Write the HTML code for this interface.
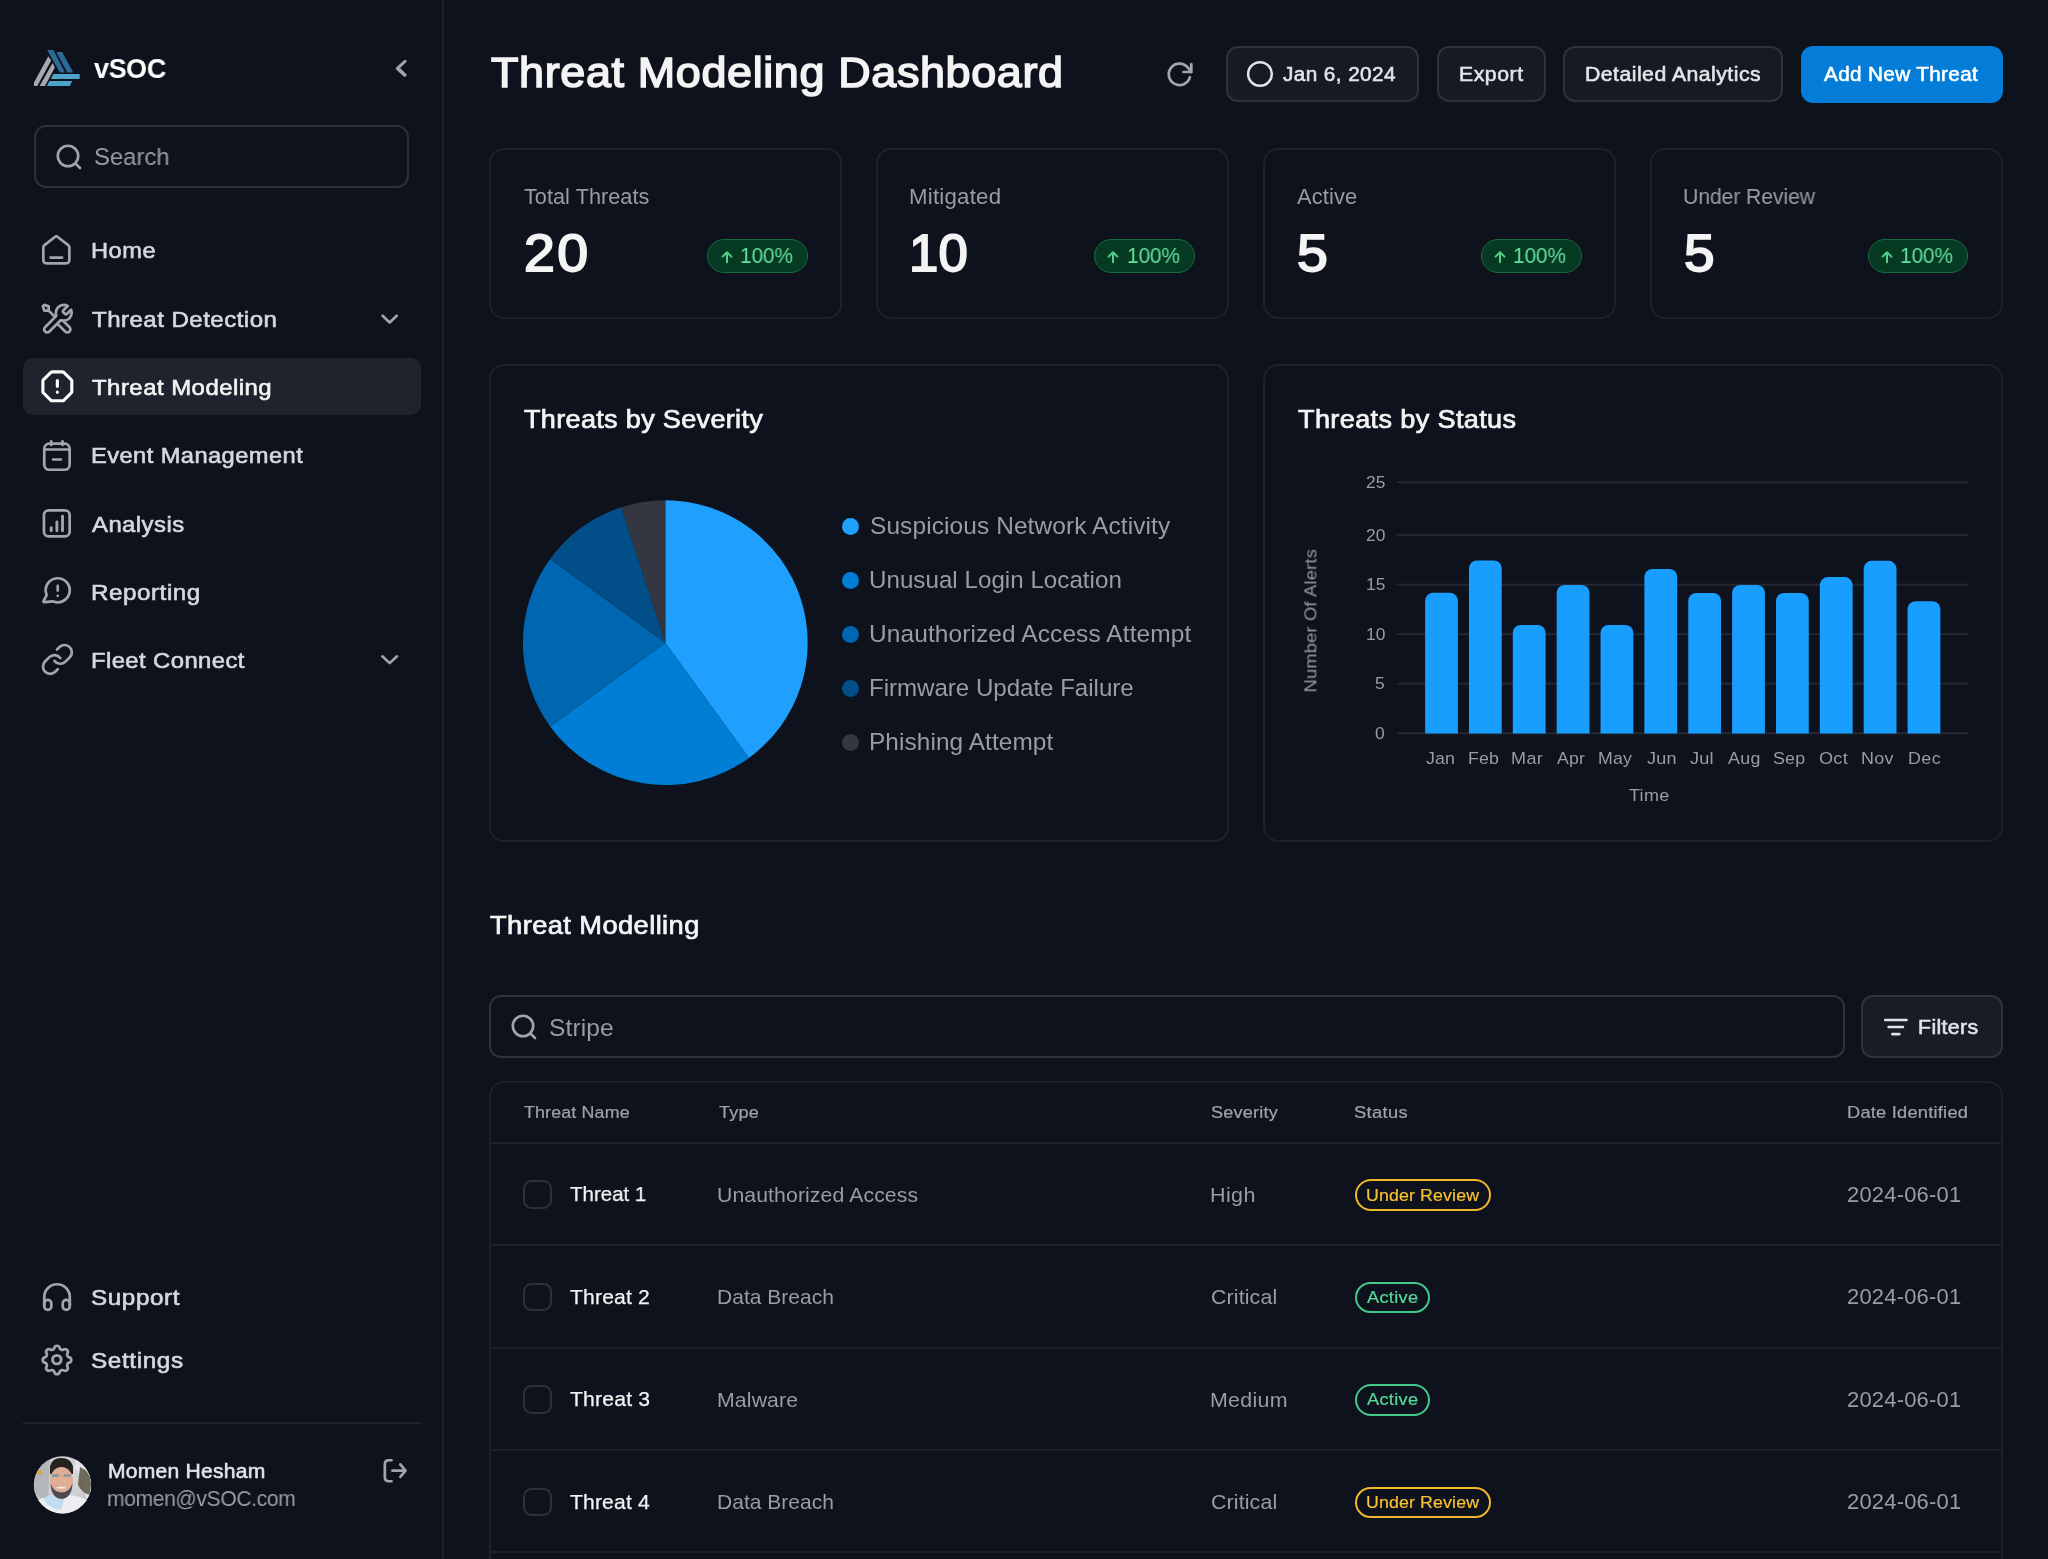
<!DOCTYPE html>
<html><head><meta charset="utf-8"><style>
html,body{margin:0;padding:0;}
body{width:2048px;height:1559px;overflow:hidden;position:relative;background:#0e121c;font-family:"Liberation Sans",sans-serif;}
.t{position:absolute;white-space:nowrap;will-change:transform;}
.a{position:absolute;box-sizing:border-box;}
svg{position:absolute;overflow:visible;}
</style></head><body>
<div class="a" style="left:442px;top:0px;width:2px;height:1559px;background:#1c202a"></div>
<svg style="left:0;top:0" width="100" height="100" viewBox="0 0 100 100">
<polygon points="33.95,86.1 33.95,82.4 48.3,56.2 51.2,60.4 37.3,86.1" fill="#a6a8ae"/>
<polygon points="39.6,86.1 52.6,62.9 54.8,67.5 45,86.1" fill="#a6a8ae"/>
<polygon points="47.2,50 53.4,50 65,72.5 59.9,72.5" fill="#2c6b98"/>
<polygon points="56.25,52.1 62.2,52.1 73.2,72.5 67.25,72.5" fill="#2c6b98"/>
<polygon points="50.9,79 53.4,73.9 79.7,73.9 79.7,79" fill="#4ea3cd"/>
<polygon points="46.9,86.1 49.5,81 72.05,81 69.8,86.1" fill="#4ea3cd"/>
<g fill="#3cb371"><circle cx="52.3" cy="83.5" r="0.45"/><circle cx="54.5" cy="84.3" r="0.45"/><circle cx="57.4" cy="84.3" r="0.45"/><circle cx="60.4" cy="84.3" r="0.45"/><circle cx="63.4" cy="84.3" r="0.45"/><circle cx="66.4" cy="84.3" r="0.45"/></g>
</svg>
<svg style="left:390px;top:56px" width="24" height="24" viewBox="0 0 24 24"><polyline points="15.5,5 8.5,12 15.5,19" fill="none" stroke="#a1a3aa" stroke-width="2.4" stroke-linecap="round" stroke-linejoin="round"/></svg>
<div class="a" style="left:34.2px;top:125.4px;width:375px;height:62.2px;border:2px solid #2c303a;border-radius:12px"></div>
<svg style="left:51.599999999999994px;top:139.9px" width="40" height="40" viewBox="0 0 40 40"><circle cx="16" cy="16" r="10.2" fill="none" stroke="#a3a5ab" stroke-width="2.6"/><line x1="23.6" y1="23.6" x2="28" y2="28" stroke="#a3a5ab" stroke-width="2.6" stroke-linecap="round"/></svg>
<div class="a" style="left:23px;top:358.2px;width:398px;height:57.2px;background:#1f232e;border-radius:10px"></div>
<svg style="left:39.40px;top:233.10px" width="34.68" height="34.68" viewBox="0 0 24 24" fill="none" stroke="#a3a5ac" stroke-width="1.869" stroke-linecap="round" stroke-linejoin="round"><path d="M8 17H16M11.0177 2.76401L4.23539 8.03914C3.78202 8.39176 3.55534 8.56807 3.39203 8.78887C3.24737 8.98446 3.1396 9.2048 3.07403 9.43907C3 9.70353 3 9.99071 3 10.5651V17.8C3 18.9201 3 19.4802 3.21799 19.908C3.40973 20.2843 3.71569 20.5903 4.09202 20.782C4.51984 21 5.0799 21 6.2 21H17.8C18.9201 21 19.4802 21 19.908 20.782C20.2843 20.5903 20.5903 20.2843 20.782 19.908C21 19.4802 21 18.9201 21 17.8V10.5651C21 9.99071 21 9.70353 20.926 9.43907C20.8604 9.2048 20.7526 8.98446 20.608 8.78887C20.4447 8.56807 20.218 8.39176 19.7646 8.03914L12.9823 2.76401C12.631 2.49076 12.4553 2.35413 12.2613 2.30162C12.0902 2.25528 11.9098 2.25528 11.7387 2.30162C11.5447 2.35413 11.369 2.49076 11.0177 2.76401Z"/></svg>
<svg style="left:39.80px;top:301.50px" width="34.56" height="34.56" viewBox="0 0 24 24" fill="none" stroke="#a3a5ac" stroke-width="1.875" stroke-linecap="round" stroke-linejoin="round"><path d="M6 6L10.5 10.5M6 6H3L2 3L3 2L6 3V6ZM19.259 2.74101L16.6314 5.36863C16.2354 5.76465 16.0373 5.96265 15.9632 6.19098C15.8979 6.39183 15.8979 6.60817 15.9632 6.80902C16.0373 7.03735 16.2354 7.23535 16.6314 7.63137L16.8686 7.86863C17.2646 8.26465 17.4627 8.46265 17.691 8.53684C17.8918 8.60211 18.1082 8.60211 18.309 8.53684C18.5373 8.46265 18.7354 8.26465 19.1314 7.86863L21.5893 5.41072C21.854 6.05488 22 6.76039 22 7.5C22 10.5376 19.5376 13 16.5 13C16.1338 13 15.7759 12.9642 15.4298 12.8959C14.9436 12.8001 14.7005 12.7521 14.5532 12.7668C14.3965 12.7824 14.3193 12.8059 14.1769 12.8767C14.0435 12.9431 13.9092 13.0774 13.6407 13.3459L6.5 20.5C5.67157 21.3284 4.32843 21.3284 3.5 20.5C2.67157 19.6716 2.67157 18.3284 3.5 17.5L10.6541 10.3459C10.9226 10.0774 11.0569 9.94309 11.1233 9.80972C11.1941 9.66734 11.2176 9.59007 11.2332 9.43337C11.2479 9.28603 11.1999 9.04293 11.1041 8.55675C11.0358 8.21063 11 7.85269 11 7.5C11 4.46243 13.4624 2 16.5 2C17.5055 2 18.448 2.26982 19.259 2.74101ZM12.0001 14.9999L17.5 20.4999C18.3284 21.3283 19.6716 21.3283 20.5 20.4999C21.3284 19.6715 21.3284 18.3283 20.5 17.4999L15.9753 12.9753C15.655 12.9447 15.3427 12.8869 15.0408 12.8044C14.6517 12.6981 14.2249 12.7753 13.9397 13.0605L12.0001 14.9999Z"/></svg>
<svg style="left:39.50px;top:369.40px" width="34.70" height="34.70" viewBox="0 0 24 24" fill="none" stroke="#ffffff" stroke-width="2.144" stroke-linecap="round" stroke-linejoin="round"><path d="M12 8V12M12 16H12.01"/><path d="M2 8.52274V15.4773C2 15.7218 2 15.8441 2.02763 15.9592C2.05213 16.0613 2.09253 16.1588 2.14736 16.2483C2.20919 16.3492 2.29568 16.4357 2.46863 16.6086L7.39137 21.5314C7.56432 21.7043 7.6508 21.7908 7.75172 21.8526C7.84119 21.9075 7.93873 21.9479 8.04077 21.9724C8.15586 22 8.27815 22 8.52274 22H15.4773C15.7218 22 15.8441 22 15.9592 21.9724C16.0613 21.9479 16.1588 21.9075 16.2483 21.8526C16.3492 21.7908 16.4357 21.7043 16.6086 21.5314L21.5314 16.6086C21.7043 16.4357 21.7908 16.3492 21.8526 16.2483C21.9075 16.1588 21.9479 16.0613 21.9724 15.9592C22 15.8441 22 15.7218 22 15.4773V8.52274C22 8.27815 22 8.15586 21.9724 8.04077C21.9479 7.93873 21.9075 7.84119 21.8526 7.75172C21.7908 7.6508 21.7043 7.56432 21.5314 7.39137L16.6086 2.46863C16.4357 2.29568 16.3492 2.20919 16.2483 2.14736C16.1588 2.09253 16.0613 2.05213 15.9592 2.02763C15.8441 2 15.7218 2 15.4773 2H8.52274C8.27815 2 8.15586 2 8.04077 2.02763C7.93873 2.05213 7.84119 2.09253 7.75172 2.14736C7.6508 2.20919 7.56432 2.29568 7.39137 2.46863L2.46863 7.39137C2.29568 7.56432 2.20919 7.6508 2.14736 7.75172C2.09253 7.84119 2.05213 7.93873 2.02763 8.04077C2 8.15586 2 8.27815 2 8.52274Z"/></svg>
<svg style="left:0;top:0" width="2048" height="1559" viewBox="0 0 2048 1559" fill="none" stroke="#a3a5ac" stroke-width="2.7" stroke-linecap="round" stroke-linejoin="round"><rect x="44.25" y="443.65" width="25.4" height="26.1" rx="5"/><path d="M44.25 449.5H69.65M51.2 441.25V445M62.5 441.25V445M53 459.5H61"/></svg>
<svg style="left:0;top:0" width="2048" height="1559" viewBox="0 0 2048 1559" fill="none" stroke="#a3a5ac" stroke-width="2.7" stroke-linecap="round" stroke-linejoin="round"><rect x="43.95" y="510.45" width="25.7" height="25.95" rx="4.6"/><path d="M51.2 527.6V530.7M56.9 521.9V530.7M62.5 516.3V530.7" stroke-width="2.9"/></svg>
<svg style="left:39.87px;top:574.19px" width="34.03" height="34.03" viewBox="0 0 24 24" fill="none" stroke="#a3a5ac" stroke-width="1.904" stroke-linecap="round" stroke-linejoin="round"><path d="M12.5 8.3V11.7M12.5 15.4H12.51"/><path d="M21 11.5C21 16.194 17.194 20 12.5 20C11.423 20 10.393 19.8 9.445 19.434C9.271 19.367 9.185 19.334 9.116 19.318C9.048 19.303 8.999 19.296 8.93 19.294C8.859 19.291 8.782 19.299 8.627 19.315L3.508 19.844C3.02 19.894 2.776 19.92 2.633 19.832C2.507 19.755 2.422 19.628 2.399 19.483C2.373 19.316 2.49 19.1 2.723 18.668L4.358 15.638C4.492 15.39 4.56 15.265 4.59 15.145C4.62 15.027 4.628 14.944 4.619 14.821C4.61 14.696 4.557 14.544 4.451 14.238C4.159 13.399 4 12.468 4 11.5C4 6.806 7.806 3 12.5 3C17.194 3 21 6.806 21 11.5Z"/></svg>
<svg style="left:39.60px;top:642.10px" width="34.80" height="34.80" viewBox="0 0 24 24" fill="none" stroke="#a3a5ac" stroke-width="1.862" stroke-linecap="round" stroke-linejoin="round"><path d="M10 13a5 5 0 0 0 7.54.54l3-3a5 5 0 0 0-7.07-7.07l-1.72 1.71"/><path d="M14 11a5 5 0 0 0-7.54-.54l-3 3a5 5 0 0 0 7.07 7.07l1.71-1.71"/></svg>
<svg style="left:0;top:0" width="2048" height="1559" viewBox="0 0 2048 1559" fill="none" stroke="#a3a5ac" stroke-width="2.6" stroke-linecap="round" stroke-linejoin="round"><polyline points="382.6,315.7 389.65,322.5 396.7,315.7"/><polyline points="382.3,656.3 389.65,663.1 397,656.3"/><polyline points="404.7,61.5 397,68.5 404.7,75.5"/></svg>
<svg style="left:39.86px;top:1279.86px" width="34.08" height="34.08" viewBox="0 0 24 24" fill="none" stroke="#a3a5ac" stroke-width="1.901" stroke-linecap="round" stroke-linejoin="round"><path d="M3 18V12C3 7.02944 7.02944 3 12 3C16.9706 3 21 7.02944 21 12V18"/><path d="M5.5 21C4.11929 21 3 19.8807 3 18.5V16.5C3 15.1193 4.11929 14 5.5 14C6.88071 14 8 15.1193 8 16.5V18.5C8 19.8807 6.88071 21 5.5 21ZM18.5 21C17.1193 21 16 19.8807 16 18.5V16.5C16 15.1193 17.1193 14 18.5 14C19.8807 14 21 15.1193 21 16.5V18.5C21 19.8807 19.8807 21 18.5 21Z"/></svg>
<svg style="left:37.85px;top:1340.65px" width="37.99" height="37.99" viewBox="0 0 24 24" fill="none" stroke="#a3a5ac" stroke-width="1.706" stroke-linecap="round" stroke-linejoin="round"><path d="M10.325 4.317c.426 -1.756 2.924 -1.756 3.35 0a1.724 1.724 0 0 0 2.573 1.066c1.543 -.94 3.31 .826 2.37 2.37a1.724 1.724 0 0 0 1.065 2.572c1.756 .426 1.756 2.924 0 3.35a1.724 1.724 0 0 0 -1.066 2.573c.94 1.543 -.826 3.31 -2.37 2.37a1.724 1.724 0 0 0 -2.572 1.065c-.426 1.756 -2.924 1.756 -3.35 0a1.724 1.724 0 0 0 -2.573 -1.066c-1.543 .94 -3.31 -.826 -2.37 -2.37a1.724 1.724 0 0 0 -1.065 -2.572c-1.756 -.426 -1.756 -2.924 0 -3.35a1.724 1.724 0 0 0 1.066 -2.573c-.94 -1.543 .826 -3.31 2.37 -2.37c1 .608 2.296 .07 2.572 -1.065z"/></svg>
<svg style="left:0;top:0" width="2048" height="1559" viewBox="0 0 2048 1559" fill="none" stroke="#a3a5ac" stroke-width="2.7" stroke-linecap="round" stroke-linejoin="round"><circle cx="56.85" cy="1359.65" r="4.25" stroke-width="2.9"/></svg>
<div class="a" style="left:23px;top:1422px;width:398px;height:2px;background:#1f232d"></div>
<svg style="left:0;top:0" width="2048" height="1559" viewBox="0 0 2048 1559">
<defs><clipPath id="av"><circle cx="62.5" cy="1484.9" r="28.6"/></clipPath>
<radialGradient id="avbg" cx="0.5" cy="0.4" r="0.6"><stop offset="0" stop-color="#dcdde0"/><stop offset="1" stop-color="#bfc1c5"/></radialGradient></defs>
<g clip-path="url(#av)">
<rect x="30" y="1452" width="66" height="66" fill="url(#avbg)"/>
<path d="M33 1470 Q40 1462 50 1460 L48 1500 Q38 1498 33 1490Z" fill="#b4b6ba"/>
<path d="M76 1458 Q90 1462 92 1478 L92 1500 L86 1498 Q84 1476 74 1468Z" fill="#e4e5e8"/>
<path d="M80 1467 Q90 1471 91 1483 L90 1495 Q82 1493 78 1485Z" fill="#5a5440" opacity="0.85"/>
<ellipse cx="39.5" cy="1472.5" rx="2.6" ry="2.2" fill="#e0a52a"/>
<path d="M34 1504 Q44 1494 62 1495 Q82 1494 92 1504 L92 1520 L34 1520Z" fill="#eceef1"/>
<path d="M44 1497 Q55 1494 65 1497 L61 1510 Q50 1509 44 1500Z" fill="#a9d0f2" opacity="0.6"/>
<path d="M50 1470 Q50 1458 61 1458 Q73 1458 73 1470 L73 1474 L50 1474Z" fill="#26221f"/>
<ellipse cx="61.5" cy="1480.5" rx="11.5" ry="13.5" fill="#dfae93"/>
<path d="M50 1470 Q52 1462 61.5 1462 Q71 1462 73 1470 L73 1467 Q70 1459 61.5 1459 Q53 1459 50 1467Z" fill="#26221f"/>
<path d="M50.5 1483 Q51 1498 61.5 1499 Q72 1498 72.5 1483 Q70 1492 61.5 1492.5 Q53 1492 50.5 1483Z" fill="#4a4a50"/>
<rect x="51.5" y="1474.3" width="7.5" height="2.4" rx="1" fill="#8995a2"/>
<rect x="63.5" y="1474.3" width="7.5" height="2.4" rx="1" fill="#8995a2"/>
<rect x="56.5" y="1486.8" width="9" height="1.8" rx="0.8" fill="#f1ebe6"/>
</g></svg>
<svg style="left:0;top:0" width="2048" height="1559" viewBox="0 0 2048 1559" fill="none" stroke="#a3a5ac" stroke-width="2.7" stroke-linecap="round" stroke-linejoin="round"><path d="M391.55 1460.25H388.85Q384.85 1460.25 384.85 1464.25V1477.25Q384.85 1481.25 388.85 1481.25H391.55M392.35 1470.6H405.5M400.3 1464.4L405.5 1470.6L400.3 1476.8"/></svg>
<svg style="left:0;top:0" width="2048" height="1559" viewBox="0 0 2048 1559" fill="none" stroke="#a3a5ac" stroke-width="2.7" stroke-linecap="round" stroke-linejoin="round"><path d="M1189.9 77.2A10.75 10.75 0 1 1 1187.9 67.6L1191.3 72.0"/><path d="M1191.3 64.2V72.0H1183.5"/></svg>
<div class="a" style="left:1226px;top:45.9px;width:193.4000000000001px;height:56.199999999999996px;background:#161a24;border:2px solid #2e323c;border-radius:12px"></div>
<div class="a" style="left:1436.6px;top:45.9px;width:109.10000000000014px;height:56.199999999999996px;background:#161a24;border:2px solid #2e323c;border-radius:12px"></div>
<div class="a" style="left:1563.2px;top:45.9px;width:220.0999999999999px;height:56.199999999999996px;background:#161a24;border:2px solid #2e323c;border-radius:12px"></div>
<div class="a" style="left:1800.5px;top:45.6px;width:202.2px;height:57px;background:#037dd8;border-radius:12px"></div>
<svg style="left:1240px;top:54px" width="40" height="40" viewBox="0 0 40 40"><circle cx="20" cy="20" r="11.85" fill="none" stroke="#e2e3e6" stroke-width="2.5"/></svg>
<div class="a" style="left:489.0px;top:148px;width:353.4px;height:170.6px;border:2px solid #1e212b;border-radius:15px"></div>
<div class="a" style="left:707.1px;top:239.4px;width:100.7px;height:33.4px;background:#073a22;border:1.5px solid #166b3e;border-radius:17px"></div>
<svg style="left:718.5px;top:249px" width="16" height="16" viewBox="0 0 16 16"><path d="M8 13.2 V3.5 M3.6 7.6 L8 3.2 L12.4 7.6" fill="none" stroke="#4fcf8a" stroke-width="2" stroke-linecap="round" stroke-linejoin="round"/></svg>
<div class="a" style="left:875.9px;top:148px;width:353.4px;height:170.6px;border:2px solid #1e212b;border-radius:15px"></div>
<div class="a" style="left:1094.0px;top:239.4px;width:100.7px;height:33.4px;background:#073a22;border:1.5px solid #166b3e;border-radius:17px"></div>
<svg style="left:1105.4px;top:249px" width="16" height="16" viewBox="0 0 16 16"><path d="M8 13.2 V3.5 M3.6 7.6 L8 3.2 L12.4 7.6" fill="none" stroke="#4fcf8a" stroke-width="2" stroke-linecap="round" stroke-linejoin="round"/></svg>
<div class="a" style="left:1262.8px;top:148px;width:353.4px;height:170.6px;border:2px solid #1e212b;border-radius:15px"></div>
<div class="a" style="left:1480.8999999999999px;top:239.4px;width:100.7px;height:33.4px;background:#073a22;border:1.5px solid #166b3e;border-radius:17px"></div>
<svg style="left:1492.3px;top:249px" width="16" height="16" viewBox="0 0 16 16"><path d="M8 13.2 V3.5 M3.6 7.6 L8 3.2 L12.4 7.6" fill="none" stroke="#4fcf8a" stroke-width="2" stroke-linecap="round" stroke-linejoin="round"/></svg>
<div class="a" style="left:1649.6px;top:148px;width:353.4px;height:170.6px;border:2px solid #1e212b;border-radius:15px"></div>
<div class="a" style="left:1867.6999999999998px;top:239.4px;width:100.7px;height:33.4px;background:#073a22;border:1.5px solid #166b3e;border-radius:17px"></div>
<svg style="left:1879.1px;top:249px" width="16" height="16" viewBox="0 0 16 16"><path d="M8 13.2 V3.5 M3.6 7.6 L8 3.2 L12.4 7.6" fill="none" stroke="#4fcf8a" stroke-width="2" stroke-linecap="round" stroke-linejoin="round"/></svg>
<div class="a" style="left:489px;top:364px;width:740.1px;height:478.2px;border:2px solid #1e212b;border-radius:15px"></div>
<div class="a" style="left:1262.6px;top:364px;width:740.4px;height:478.2px;border:2px solid #1e212b;border-radius:15px"></div>
<svg style="left:0;top:0" width="2048" height="1559" viewBox="0 0 2048 1559"><path d="M665.3 642.7 L665.30 500.30 A142.4 142.4 0 0 1 749.00 757.90 Z" fill="#1fa0fe"/><path d="M665.3 642.7 L749.00 757.90 A142.4 142.4 0 0 1 550.10 726.40 Z" fill="#007ed6"/><path d="M665.3 642.7 L550.10 726.40 A142.4 142.4 0 0 1 550.10 559.00 Z" fill="#0066b0"/><path d="M665.3 642.7 L550.10 559.00 A142.4 142.4 0 0 1 621.30 507.27 Z" fill="#024e89"/><path d="M665.3 642.7 L621.30 507.27 A142.4 142.4 0 0 1 665.30 500.30 Z" fill="#343742"/></svg>
<div class="a" style="left:841.6999999999999px;top:517.5999999999999px;width:17.4px;height:17.4px;background:#1fa0fe;border-radius:50%"></div>
<div class="a" style="left:841.6999999999999px;top:571.5999999999999px;width:17.4px;height:17.4px;background:#007ed6;border-radius:50%"></div>
<div class="a" style="left:841.6999999999999px;top:625.5999999999999px;width:17.4px;height:17.4px;background:#0066b0;border-radius:50%"></div>
<div class="a" style="left:841.6999999999999px;top:679.5999999999999px;width:17.4px;height:17.4px;background:#024e89;border-radius:50%"></div>
<div class="a" style="left:841.6999999999999px;top:733.5999999999999px;width:17.4px;height:17.4px;background:#343742;border-radius:50%"></div>
<svg style="left:0;top:0" width="2048" height="1559" viewBox="0 0 2048 1559"><rect x="1396.8" y="732.3" width="571.2" height="2" fill="#242833"/><rect x="1396.8" y="682.6" width="571.2" height="2" fill="#242833"/><rect x="1396.8" y="633.2" width="571.2" height="2" fill="#242833"/><rect x="1396.8" y="583.7" width="571.2" height="2" fill="#242833"/><rect x="1396.8" y="534.1" width="571.2" height="2" fill="#242833"/><rect x="1396.8" y="481.3" width="571.2" height="2" fill="#242833"/><path d="M1425.10 733.5 V600.80 a8 8 0 0 1 8 -8 H1449.90 a8 8 0 0 1 8 8 V733.5 Z" fill="#189eff"/><path d="M1468.96 733.5 V568.50 a8 8 0 0 1 8 -8 H1493.76 a8 8 0 0 1 8 8 V733.5 Z" fill="#189eff"/><path d="M1512.82 733.5 V633.00 a8 8 0 0 1 8 -8 H1537.62 a8 8 0 0 1 8 8 V733.5 Z" fill="#189eff"/><path d="M1556.68 733.5 V592.90 a8 8 0 0 1 8 -8 H1581.48 a8 8 0 0 1 8 8 V733.5 Z" fill="#189eff"/><path d="M1600.54 733.5 V633.00 a8 8 0 0 1 8 -8 H1625.34 a8 8 0 0 1 8 8 V733.5 Z" fill="#189eff"/><path d="M1644.40 733.5 V576.90 a8 8 0 0 1 8 -8 H1669.20 a8 8 0 0 1 8 8 V733.5 Z" fill="#189eff"/><path d="M1688.26 733.5 V601.00 a8 8 0 0 1 8 -8 H1713.06 a8 8 0 0 1 8 8 V733.5 Z" fill="#189eff"/><path d="M1732.12 733.5 V592.90 a8 8 0 0 1 8 -8 H1756.92 a8 8 0 0 1 8 8 V733.5 Z" fill="#189eff"/><path d="M1775.98 733.5 V601.00 a8 8 0 0 1 8 -8 H1800.78 a8 8 0 0 1 8 8 V733.5 Z" fill="#189eff"/><path d="M1819.84 733.5 V585.10 a8 8 0 0 1 8 -8 H1844.64 a8 8 0 0 1 8 8 V733.5 Z" fill="#189eff"/><path d="M1863.70 733.5 V568.80 a8 8 0 0 1 8 -8 H1888.50 a8 8 0 0 1 8 8 V733.5 Z" fill="#189eff"/><path d="M1907.56 733.5 V609.20 a8 8 0 0 1 8 -8 H1932.36 a8 8 0 0 1 8 8 V733.5 Z" fill="#189eff"/></svg>
<div class="a" style="left:489px;top:995.4px;width:1356px;height:62.6px;border:2px solid #2e323c;border-radius:12px"></div>
<svg style="left:506.79999999999995px;top:1010.4000000000001px" width="40" height="40" viewBox="0 0 40 40"><circle cx="16" cy="16" r="10.2" fill="none" stroke="#a3a5ab" stroke-width="2.6"/><line x1="23.6" y1="23.6" x2="28" y2="28" stroke="#a3a5ab" stroke-width="2.6" stroke-linecap="round"/></svg>
<div class="a" style="left:1861.2px;top:995.4px;width:141.79999999999995px;height:62.60000000000002px;background:#181c26;border:2px solid #2e323c;border-radius:12px"></div>
<svg style="left:1875px;top:1007px" width="40" height="40" viewBox="0 0 40 40"><path d="M10.2 12.9 H31.6 M13.6 19.95 H28 M17.3 27.1 H24.4" fill="none" stroke="#e2e3e6" stroke-width="2.55" stroke-linecap="round"/></svg>
<div class="a" style="left:489px;top:1080.8px;width:1514px;height:600px;border:2px solid #1e212b;border-radius:15px"></div>
<div class="a" style="left:491px;top:1141.9px;width:1510px;height:2px;background:#1e212b"></div>
<div class="a" style="left:491px;top:1244.3px;width:1510px;height:2px;background:#1e212b"></div>
<div class="a" style="left:491px;top:1346.7px;width:1510px;height:2px;background:#1e212b"></div>
<div class="a" style="left:491px;top:1449.1px;width:1510px;height:2px;background:#1e212b"></div>
<div class="a" style="left:491px;top:1551.4px;width:1510px;height:2px;background:#1e212b"></div>
<div class="a" style="left:523.1px;top:1180.4px;width:28.9px;height:28.6px;border:2px solid #2d3039;border-radius:8.5px"></div>
<div class="a" style="left:523.1px;top:1282.9px;width:28.9px;height:28.6px;border:2px solid #2d3039;border-radius:8.5px"></div>
<div class="a" style="left:523.1px;top:1385.4px;width:28.9px;height:28.6px;border:2px solid #2d3039;border-radius:8.5px"></div>
<div class="a" style="left:523.1px;top:1487.9px;width:28.9px;height:28.6px;border:2px solid #2d3039;border-radius:8.5px"></div>
<div class="a" style="left:523.1px;top:1590.4px;width:28.9px;height:28.6px;border:2px solid #2d3039;border-radius:8.5px"></div>
<div class="a" style="left:1354.5px;top:1179.4px;width:136.8px;height:31.2px;border:2.5px solid #f1b72d;border-radius:16px"></div>
<div class="a" style="left:1354.5px;top:1281.9px;width:75.3px;height:31.2px;border:2.5px solid #43c98a;border-radius:16px"></div>
<div class="a" style="left:1354.5px;top:1384.4px;width:75.3px;height:31.2px;border:2.5px solid #43c98a;border-radius:16px"></div>
<div class="a" style="left:1354.5px;top:1486.9px;width:136.8px;height:31.2px;border:2.5px solid #f1b72d;border-radius:16px"></div>
<div class="a" style="left:1354.5px;top:1589.4px;width:75.3px;height:31.2px;border:2.5px solid #43c98a;border-radius:16px"></div>
<div class="t" style="left:93.96px;top:51.00px;font-size:27.6px;line-height:36px;letter-spacing:-0.445px;color:#ffffff;font-weight:bold;transform-origin:0 0;transform:scaleX(0.9781);">vSOC</div>
<div class="t" style="left:93.62px;top:141.00px;font-size:24.1px;line-height:32px;letter-spacing:-0.052px;color:#9a9ca4;transform-origin:0 0;transform:scaleX(0.9921);">Search</div>
<div class="t" style="left:91.01px;top:236.00px;font-size:22.63px;line-height:30px;letter-spacing:0.543px;color:#d6d8dc;-webkit-text-stroke:0.63px #d6d8dc;transform-origin:0 0;transform:scaleX(1.0433);">Home</div>
<div class="t" style="left:92.37px;top:305.00px;font-size:22.63px;line-height:30px;letter-spacing:0.434px;color:#d6d8dc;-webkit-text-stroke:0.63px #d6d8dc;transform-origin:0 0;transform:scaleX(1.0639);">Threat Detection</div>
<div class="t" style="left:92.37px;top:373.00px;font-size:22.63px;line-height:30px;letter-spacing:0.443px;color:#f4f4f5;-webkit-text-stroke:0.63px #f4f4f5;transform-origin:0 0;transform:scaleX(1.0587);">Threat Modeling</div>
<div class="t" style="left:91.00px;top:441.00px;font-size:22.63px;line-height:30px;letter-spacing:0.404px;color:#d6d8dc;-webkit-text-stroke:0.63px #d6d8dc;transform-origin:0 0;transform:scaleX(1.0468);">Event Management</div>
<div class="t" style="left:92.45px;top:510.00px;font-size:22.63px;line-height:30px;letter-spacing:0.433px;color:#d6d8dc;-webkit-text-stroke:0.63px #d6d8dc;transform-origin:0 0;transform:scaleX(1.0553);">Analysis</div>
<div class="t" style="left:90.93px;top:578.00px;font-size:22.63px;line-height:30px;letter-spacing:0.512px;color:#d6d8dc;-webkit-text-stroke:0.63px #d6d8dc;transform-origin:0 0;transform:scaleX(1.0690);">Reporting</div>
<div class="t" style="left:90.97px;top:646.00px;font-size:22.63px;line-height:30px;letter-spacing:0.388px;color:#d6d8dc;-webkit-text-stroke:0.63px #d6d8dc;transform-origin:0 0;transform:scaleX(1.0544);">Fleet Connect</div>
<div class="t" style="left:90.95px;top:1283.00px;font-size:22.63px;line-height:30px;letter-spacing:0.567px;color:#d6d8dc;-webkit-text-stroke:0.63px #d6d8dc;transform-origin:0 0;transform:scaleX(1.0701);">Support</div>
<div class="t" style="left:90.95px;top:1346.00px;font-size:22.63px;line-height:30px;letter-spacing:0.547px;color:#d6d8dc;-webkit-text-stroke:0.63px #d6d8dc;transform-origin:0 0;transform:scaleX(1.0756);">Settings</div>
<div class="t" style="left:107.54px;top:1457.00px;font-size:20.5px;line-height:27px;letter-spacing:0.227px;color:#e2e4e8;-webkit-text-stroke:0.57px #e2e4e8;transform-origin:0 0;transform:scaleX(1.0290);">Momen Hesham</div>
<div class="t" style="left:107.39px;top:1484.00px;font-size:21.7px;line-height:29px;letter-spacing:-0.339px;color:#9a9ca4;transform-origin:0 0;transform:scaleX(0.9689);">momen@vSOC.com</div>
<div class="t" style="left:490.83px;top:44.00px;font-size:43.09px;line-height:57px;letter-spacing:0.605px;color:#f4f4f5;-webkit-text-stroke:1.55px #f4f4f5;transform-origin:0 0;transform:scaleX(1.0429);">Threat Modeling Dashboard</div>
<div class="t" style="left:1283.27px;top:61.00px;font-size:19.7px;line-height:26px;letter-spacing:0.390px;color:#e4e5e8;-webkit-text-stroke:0.55px #e4e5e8;transform-origin:0 0;transform:scaleX(1.0540);">Jan 6, 2024</div>
<div class="t" style="left:1458.55px;top:61.00px;font-size:19.7px;line-height:26px;letter-spacing:0.504px;color:#e4e5e8;-webkit-text-stroke:0.55px #e4e5e8;transform-origin:0 0;transform:scaleX(1.0775);">Export</div>
<div class="t" style="left:1585.15px;top:61.00px;font-size:19.7px;line-height:26px;letter-spacing:0.440px;color:#e4e5e8;-webkit-text-stroke:0.55px #e4e5e8;transform-origin:0 0;transform:scaleX(1.0783);">Detailed Analytics</div>
<div class="t" style="left:1824.34px;top:61.00px;font-size:19.7px;line-height:26px;letter-spacing:0.341px;color:#ffffff;-webkit-text-stroke:0.55px #ffffff;transform-origin:0 0;transform:scaleX(1.0510);">Add New Threat</div>
<div class="t" style="left:523.87px;top:183.00px;font-size:21.5px;line-height:28px;letter-spacing:0.042px;color:#9a9ca4;transform-origin:0 0;transform:scaleX(1.0075);">Total Threats</div>
<div class="t" style="left:523.50px;top:219.00px;font-size:52.3px;line-height:68px;letter-spacing:2.275px;color:#f4f4f5;-webkit-text-stroke:1.88px #f4f4f5;transform-origin:0 0;transform:scaleX(1.0602);">20</div>
<div class="t" style="left:740.05px;top:242.00px;font-size:21.2px;line-height:28px;letter-spacing:-0.126px;color:#63e29f;transform-origin:0 0;transform:scaleX(0.9838);">100%</div>
<div class="t" style="left:908.80px;top:183.00px;font-size:21.5px;line-height:28px;letter-spacing:0.217px;color:#9a9ca4;transform-origin:0 0;transform:scaleX(1.0342);">Mitigated</div>
<div class="t" style="left:908.95px;top:219.00px;font-size:52.3px;line-height:68px;letter-spacing:0.090px;color:#f4f4f5;-webkit-text-stroke:1.88px #f4f4f5;transform-origin:0 0;transform:scaleX(1.0074);">10</div>
<div class="t" style="left:1126.55px;top:242.00px;font-size:21.2px;line-height:28px;letter-spacing:-0.126px;color:#63e29f;transform-origin:0 0;transform:scaleX(0.9838);">100%</div>
<div class="t" style="left:1297.19px;top:183.00px;font-size:21.5px;line-height:28px;letter-spacing:0.137px;color:#9a9ca4;transform-origin:0 0;transform:scaleX(1.0171);">Active</div>
<div class="t" style="left:1297.35px;top:219.00px;font-size:52.3px;line-height:68px;letter-spacing:0.000px;color:#f4f4f5;-webkit-text-stroke:1.88px #f4f4f5;transform-origin:0 0;transform:scaleX(1.0597);">5</div>
<div class="t" style="left:1513.15px;top:242.00px;font-size:21.2px;line-height:28px;letter-spacing:-0.126px;color:#63e29f;transform-origin:0 0;transform:scaleX(0.9838);">100%</div>
<div class="t" style="left:1682.81px;top:183.00px;font-size:21.5px;line-height:28px;letter-spacing:-0.114px;color:#9a9ca4;transform-origin:0 0;transform:scaleX(0.9872);">Under Review</div>
<div class="t" style="left:1684.35px;top:219.00px;font-size:52.3px;line-height:68px;letter-spacing:0.000px;color:#f4f4f5;-webkit-text-stroke:1.88px #f4f4f5;transform-origin:0 0;transform:scaleX(1.0507);">5</div>
<div class="t" style="left:1900.15px;top:242.00px;font-size:21.2px;line-height:28px;letter-spacing:-0.126px;color:#63e29f;transform-origin:0 0;transform:scaleX(0.9838);">100%</div>
<div class="t" style="left:524.49px;top:402.00px;font-size:26.0px;line-height:34px;letter-spacing:0.314px;color:#f4f4f5;-webkit-text-stroke:0.73px #f4f4f5;transform-origin:0 0;transform:scaleX(1.0400);">Threats by Severity</div>
<div class="t" style="left:1298.09px;top:402.00px;font-size:26.0px;line-height:34px;letter-spacing:0.343px;color:#f4f4f5;-webkit-text-stroke:0.73px #f4f4f5;transform-origin:0 0;transform:scaleX(1.0422);">Threats by Status</div>
<div class="t" style="left:869.80px;top:510.00px;font-size:24.1px;line-height:32px;letter-spacing:0.101px;color:#9a9ca4;transform-origin:0 0;transform:scaleX(1.0146);">Suspicious Network Activity</div>
<div class="t" style="left:869.20px;top:564.00px;font-size:24.1px;line-height:32px;letter-spacing:0.025px;color:#9a9ca4;transform-origin:0 0;transform:scaleX(1.0020);">Unusual Login Location</div>
<div class="t" style="left:869.20px;top:618.00px;font-size:24.1px;line-height:32px;letter-spacing:0.111px;color:#9a9ca4;transform-origin:0 0;transform:scaleX(1.0146);">Unauthorized Access Attempt</div>
<div class="t" style="left:869.20px;top:672.00px;font-size:24.1px;line-height:32px;letter-spacing:-0.019px;color:#9a9ca4;transform-origin:0 0;transform:scaleX(0.9991);">Firmware Update Failure</div>
<div class="t" style="left:869.20px;top:726.00px;font-size:24.1px;line-height:32px;letter-spacing:0.089px;color:#9a9ca4;transform-origin:0 0;transform:scaleX(1.0118);">Phishing Attempt</div>
<div class="t" style="left:1375.34px;top:722.00px;font-size:17.4px;line-height:23px;letter-spacing:0.000px;color:#9a9ca4;transform-origin:0 0;transform:scaleX(1.0000);">0</div>
<div class="t" style="left:1375.40px;top:672.00px;font-size:17.4px;line-height:23px;letter-spacing:0.000px;color:#9a9ca4;transform-origin:0 0;transform:scaleX(1.0000);">5</div>
<div class="t" style="left:1365.56px;top:623.00px;font-size:17.4px;line-height:23px;letter-spacing:0.000px;color:#9a9ca4;transform-origin:0 0;transform:scaleX(1.0000);">10</div>
<div class="t" style="left:1365.63px;top:573.00px;font-size:17.4px;line-height:23px;letter-spacing:0.000px;color:#9a9ca4;transform-origin:0 0;transform:scaleX(1.0000);">15</div>
<div class="t" style="left:1365.56px;top:524.00px;font-size:17.4px;line-height:23px;letter-spacing:0.000px;color:#9a9ca4;transform-origin:0 0;transform:scaleX(1.0000);">20</div>
<div class="t" style="left:1365.63px;top:471.00px;font-size:17.4px;line-height:23px;letter-spacing:0.000px;color:#9a9ca4;transform-origin:0 0;transform:scaleX(1.0000);">25</div>
<div class="t" style="left:1425.70px;top:747.00px;font-size:17.4px;line-height:23px;letter-spacing:0.115px;color:#9a9ca4;transform-origin:0 0;transform:scaleX(1.0241);">Jan</div>
<div class="t" style="left:1467.91px;top:747.00px;font-size:17.4px;line-height:23px;letter-spacing:0.115px;color:#9a9ca4;transform-origin:0 0;transform:scaleX(1.0210);">Feb</div>
<div class="t" style="left:1511.09px;top:747.00px;font-size:17.4px;line-height:23px;letter-spacing:0.379px;color:#9a9ca4;transform-origin:0 0;transform:scaleX(1.0355);">Mar</div>
<div class="t" style="left:1557.00px;top:747.00px;font-size:17.4px;line-height:23px;letter-spacing:0.189px;color:#9a9ca4;transform-origin:0 0;transform:scaleX(1.0184);">Apr</div>
<div class="t" style="left:1598.01px;top:747.00px;font-size:17.4px;line-height:23px;letter-spacing:0.217px;color:#9a9ca4;transform-origin:0 0;transform:scaleX(1.0216);">May</div>
<div class="t" style="left:1646.60px;top:747.00px;font-size:17.4px;line-height:23px;letter-spacing:0.214px;color:#9a9ca4;transform-origin:0 0;transform:scaleX(1.0377);">Jun</div>
<div class="t" style="left:1690.29px;top:747.00px;font-size:17.4px;line-height:23px;letter-spacing:0.188px;color:#9a9ca4;transform-origin:0 0;transform:scaleX(1.0445);">Jul</div>
<div class="t" style="left:1727.90px;top:747.00px;font-size:17.4px;line-height:23px;letter-spacing:0.317px;color:#9a9ca4;transform-origin:0 0;transform:scaleX(1.0265);">Aug</div>
<div class="t" style="left:1772.94px;top:747.00px;font-size:17.4px;line-height:23px;letter-spacing:0.214px;color:#9a9ca4;transform-origin:0 0;transform:scaleX(1.0239);">Sep</div>
<div class="t" style="left:1818.50px;top:747.00px;font-size:17.4px;line-height:23px;letter-spacing:0.266px;color:#9a9ca4;transform-origin:0 0;transform:scaleX(1.0399);">Oct</div>
<div class="t" style="left:1861.10px;top:747.00px;font-size:17.4px;line-height:23px;letter-spacing:0.358px;color:#9a9ca4;transform-origin:0 0;transform:scaleX(1.0292);">Nov</div>
<div class="t" style="left:1907.60px;top:747.00px;font-size:17.4px;line-height:23px;letter-spacing:0.375px;color:#9a9ca4;transform-origin:0 0;transform:scaleX(1.0296);">Dec</div>
<div class="t" style="left:1628.95px;top:784.00px;font-size:17.4px;line-height:23px;letter-spacing:0.268px;color:#9a9ca4;transform-origin:0 0;transform:scaleX(1.0350);">Time</div>
<div class="t" style="left:1315.24px;top:673.60px;font-size:17.4px;line-height:23px;letter-spacing:0.253px;color:#9a9ca4;transform-origin:1.36px 17.00px;transform:rotate(-90deg) scaleX(1.0441);">Number Of Alerts</div>
<div class="t" style="left:490.19px;top:908.00px;font-size:26.0px;line-height:34px;letter-spacing:0.398px;color:#f4f4f5;-webkit-text-stroke:0.73px #f4f4f5;transform-origin:0 0;transform:scaleX(1.0486);">Threat Modelling</div>
<div class="t" style="left:548.70px;top:1012.00px;font-size:24.1px;line-height:32px;letter-spacing:0.133px;color:#9a9ca4;transform-origin:0 0;transform:scaleX(1.0164);">Stripe</div>
<div class="t" style="left:1918.34px;top:1014.00px;font-size:20.1px;line-height:27px;letter-spacing:0.348px;color:#e4e5e8;-webkit-text-stroke:0.56px #e4e5e8;transform-origin:0 0;transform:scaleX(1.0601);">Filters</div>
<div class="t" style="left:523.85px;top:1101.00px;font-size:17.4px;line-height:23px;letter-spacing:0.159px;color:#a0a3aa;-webkit-text-stroke:0.21px #a0a3aa;transform-origin:0 0;transform:scaleX(1.0240);">Threat Name</div>
<div class="t" style="left:718.75px;top:1101.00px;font-size:17.4px;line-height:23px;letter-spacing:0.210px;color:#a0a3aa;-webkit-text-stroke:0.21px #a0a3aa;transform-origin:0 0;transform:scaleX(1.0384);">Type</div>
<div class="t" style="left:1210.55px;top:1101.00px;font-size:17.4px;line-height:23px;letter-spacing:0.202px;color:#a0a3aa;-webkit-text-stroke:0.21px #a0a3aa;transform-origin:0 0;transform:scaleX(1.0388);">Severity</div>
<div class="t" style="left:1354.24px;top:1101.00px;font-size:17.4px;line-height:23px;letter-spacing:0.315px;color:#a0a3aa;-webkit-text-stroke:0.21px #a0a3aa;transform-origin:0 0;transform:scaleX(1.0536);">Status</div>
<div class="t" style="left:1846.89px;top:1101.00px;font-size:17.4px;line-height:23px;letter-spacing:0.230px;color:#a0a3aa;-webkit-text-stroke:0.21px #a0a3aa;transform-origin:0 0;transform:scaleX(1.0480);">Date Identified</div>
<div class="t" style="left:569.76px;top:1180.00px;font-size:20.6px;line-height:27px;letter-spacing:-0.046px;color:#f4f4f5;-webkit-text-stroke:0.25px #f4f4f5;transform-origin:0 0;transform:scaleX(0.9970);">Threat 1</div>
<div class="t" style="left:717.43px;top:1181.00px;font-size:20.9px;line-height:28px;letter-spacing:0.099px;color:#9a9ca4;transform-origin:0 0;transform:scaleX(1.0152);">Unauthorized Access</div>
<div class="t" style="left:1209.90px;top:1181.00px;font-size:20.9px;line-height:28px;letter-spacing:0.355px;color:#9a9ca4;transform-origin:0 0;transform:scaleX(1.0298);">High</div>
<div class="t" style="left:1847.42px;top:1181.00px;font-size:21.2px;line-height:28px;letter-spacing:0.206px;color:#9a9ca4;transform-origin:0 0;transform:scaleX(1.0348);">2024-06-01</div>
<div class="t" style="left:1365.77px;top:1184.00px;font-size:17.4px;line-height:23px;letter-spacing:0.150px;color:#f8c131;-webkit-text-stroke:0.21px #f8c131;transform-origin:0 0;transform:scaleX(1.0193);">Under Review</div>
<div class="t" style="left:569.75px;top:1283.00px;font-size:20.6px;line-height:27px;letter-spacing:0.172px;color:#f4f4f5;-webkit-text-stroke:0.25px #f4f4f5;transform-origin:0 0;transform:scaleX(1.0241);">Threat 2</div>
<div class="t" style="left:717.34px;top:1283.00px;font-size:20.9px;line-height:28px;letter-spacing:0.033px;color:#9a9ca4;transform-origin:0 0;transform:scaleX(1.0045);">Data Breach</div>
<div class="t" style="left:1210.79px;top:1283.00px;font-size:20.9px;line-height:28px;letter-spacing:0.129px;color:#9a9ca4;transform-origin:0 0;transform:scaleX(1.0218);">Critical</div>
<div class="t" style="left:1847.42px;top:1283.00px;font-size:21.2px;line-height:28px;letter-spacing:0.206px;color:#9a9ca4;transform-origin:0 0;transform:scaleX(1.0348);">2024-06-01</div>
<div class="t" style="left:1367.16px;top:1286.00px;font-size:17.4px;line-height:23px;letter-spacing:0.313px;color:#55d99a;-webkit-text-stroke:0.21px #55d99a;transform-origin:0 0;transform:scaleX(1.0439);">Active</div>
<div class="t" style="left:569.75px;top:1385.00px;font-size:20.6px;line-height:27px;letter-spacing:0.180px;color:#f4f4f5;-webkit-text-stroke:0.25px #f4f4f5;transform-origin:0 0;transform:scaleX(1.0279);">Threat 3</div>
<div class="t" style="left:717.32px;top:1386.00px;font-size:20.9px;line-height:28px;letter-spacing:0.133px;color:#9a9ca4;transform-origin:0 0;transform:scaleX(1.0170);">Malware</div>
<div class="t" style="left:1209.90px;top:1386.00px;font-size:20.9px;line-height:28px;letter-spacing:0.308px;color:#9a9ca4;transform-origin:0 0;transform:scaleX(1.0232);">Medium</div>
<div class="t" style="left:1847.42px;top:1386.00px;font-size:21.2px;line-height:28px;letter-spacing:0.206px;color:#9a9ca4;transform-origin:0 0;transform:scaleX(1.0348);">2024-06-01</div>
<div class="t" style="left:1367.16px;top:1388.00px;font-size:17.4px;line-height:23px;letter-spacing:0.313px;color:#55d99a;-webkit-text-stroke:0.21px #55d99a;transform-origin:0 0;transform:scaleX(1.0439);">Active</div>
<div class="t" style="left:569.75px;top:1488.00px;font-size:20.6px;line-height:27px;letter-spacing:0.165px;color:#f4f4f5;-webkit-text-stroke:0.25px #f4f4f5;transform-origin:0 0;transform:scaleX(1.0234);">Threat 4</div>
<div class="t" style="left:717.34px;top:1488.00px;font-size:20.9px;line-height:28px;letter-spacing:0.033px;color:#9a9ca4;transform-origin:0 0;transform:scaleX(1.0045);">Data Breach</div>
<div class="t" style="left:1210.79px;top:1488.00px;font-size:20.9px;line-height:28px;letter-spacing:0.129px;color:#9a9ca4;transform-origin:0 0;transform:scaleX(1.0218);">Critical</div>
<div class="t" style="left:1847.42px;top:1488.00px;font-size:21.2px;line-height:28px;letter-spacing:0.206px;color:#9a9ca4;transform-origin:0 0;transform:scaleX(1.0348);">2024-06-01</div>
<div class="t" style="left:1365.77px;top:1491.00px;font-size:17.4px;line-height:23px;letter-spacing:0.150px;color:#f8c131;-webkit-text-stroke:0.21px #f8c131;transform-origin:0 0;transform:scaleX(1.0193);">Under Review</div>
<div class="t" style="left:569.75px;top:1590.00px;font-size:20.6px;line-height:27px;letter-spacing:0.170px;color:#f4f4f5;-webkit-text-stroke:0.25px #f4f4f5;transform-origin:0 0;transform:scaleX(1.0275);">Threat 5</div>
<div class="t" style="left:717.32px;top:1591.00px;font-size:20.9px;line-height:28px;letter-spacing:0.133px;color:#9a9ca4;transform-origin:0 0;transform:scaleX(1.0170);">Malware</div>
<div class="t" style="left:1209.86px;top:1591.00px;font-size:20.9px;line-height:28px;letter-spacing:1.916px;color:#9a9ca4;transform-origin:0 0;transform:scaleX(1.1941);">Low</div>
<div class="t" style="left:1847.42px;top:1591.00px;font-size:21.2px;line-height:28px;letter-spacing:0.206px;color:#9a9ca4;transform-origin:0 0;transform:scaleX(1.0348);">2024-06-01</div>
<div class="t" style="left:1367.16px;top:1594.00px;font-size:17.4px;line-height:23px;letter-spacing:0.313px;color:#55d99a;-webkit-text-stroke:0.21px #55d99a;transform-origin:0 0;transform:scaleX(1.0439);">Active</div>
</body></html>
